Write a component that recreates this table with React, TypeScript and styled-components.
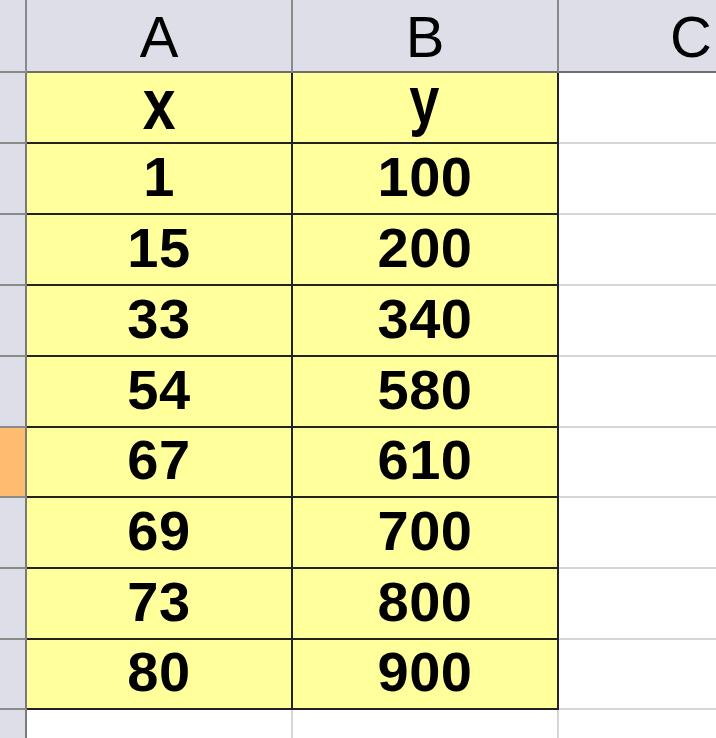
import React from "react";
import styled, { createGlobalStyle } from "styled-components";

const GlobalStyle = createGlobalStyle`
  html, body {
    margin: 0;
    padding: 0;
    background: #ffffff;
    overflow: hidden;
  }
  body {
    font-family: "Liberation Sans", Arial, sans-serif;
  }
`;

const rows: [string, string][] = [
  ["1", "100"],
  ["15", "200"],
  ["33", "340"],
  ["54", "580"],
  ["67", "610"],
  ["69", "700"],
  ["73", "800"],
  ["80", "900"],
];

const activeRow = 4;

export default function App() {
  return (
    <>
      <GlobalStyle />
      <Sheet>
        <Corner />
        <ColHead>A</ColHead>
        <ColHead>B</ColHead>
        <ColHead $cut>C</ColHead>

        <RowHead />
        <Cell $filled>
          <Label>x</Label>
        </Cell>
        <Cell $filled>
          <Label $descender>y</Label>
        </Cell>
        <Cell $last />

        {rows.map(([x, y], i) => (
          <React.Fragment key={i}>
            <RowHead $active={i === activeRow} />
            <Cell $filled>{x}</Cell>
            <Cell $filled>{y}</Cell>
            <Cell $last />
          </React.Fragment>
        ))}

        <RowHead />
        <Cell />
        <Cell />
        <Cell $last />
      </Sheet>
    </>
  );
}

const Sheet = styled.div`
  display: grid;
  grid-template-columns: 27px 266px 266px 1fr;
  grid-template-rows: 73px 71px 71px 71px 71px 71px 70px 71px 71px 70px 40px;
  width: 716px;
  height: 738px;
  overflow: hidden;
`;

const Corner = styled.div`
  background: #dedee8;
  border-right: 2px solid #8a8a8a;
  border-bottom: 2px solid #8a8a8a;
`;

const ColHead = styled.div<{ $cut?: boolean }>`
  display: flex;
  align-items: center;
  justify-content: ${(p) => (p.$cut ? "flex-start" : "center")};
  padding-left: ${(p) => (p.$cut ? "111px" : "0")};
  background: #dedee8;
  border-right: ${(p) => (p.$cut ? "none" : "2px solid #8a8a8a")};
  border-bottom: 2px solid #6e6e6e;
  font-size: 58px;
  line-height: 1;
  color: #000;
  padding-top: 2px;
  box-sizing: border-box;
  overflow: hidden;
`;

const RowHead = styled.div<{ $active?: boolean }>`
  background: ${(p) => (p.$active ? "#ffbb6e" : "#dedee8")};
  border-right: 2px solid #7a7a7a;
  border-bottom: 2px solid #8a8a8a;
`;

const Cell = styled.div<{ $filled?: boolean; $last?: boolean }>`
  display: flex;
  align-items: center;
  justify-content: center;
  box-sizing: border-box;
  padding-bottom: 4px;
  background: ${(p) => (p.$filled ? "#ffff9c" : "#ffffff")};
  border-right: ${(p) =>
    p.$last ? "none" : `2px solid ${p.$filled ? "#222" : "#d6d6d6"}`};
  border-bottom: 2px solid ${(p) => (p.$filled ? "#222" : "#d6d6d6")};
  font-size: 56px;
  line-height: 1;
  font-weight: 700;
  color: #000;
  letter-spacing: 0.5px;
`;

const Label = styled.span<{ $descender?: boolean }>`
  display: inline-block;
  font-size: ${(p) => (p.$descender ? "66px" : "72px")};
  line-height: 0.7;
  padding-bottom: ${(p) => (p.$descender ? "10px" : "2px")};
  transform: scaleX(0.82);
`;
